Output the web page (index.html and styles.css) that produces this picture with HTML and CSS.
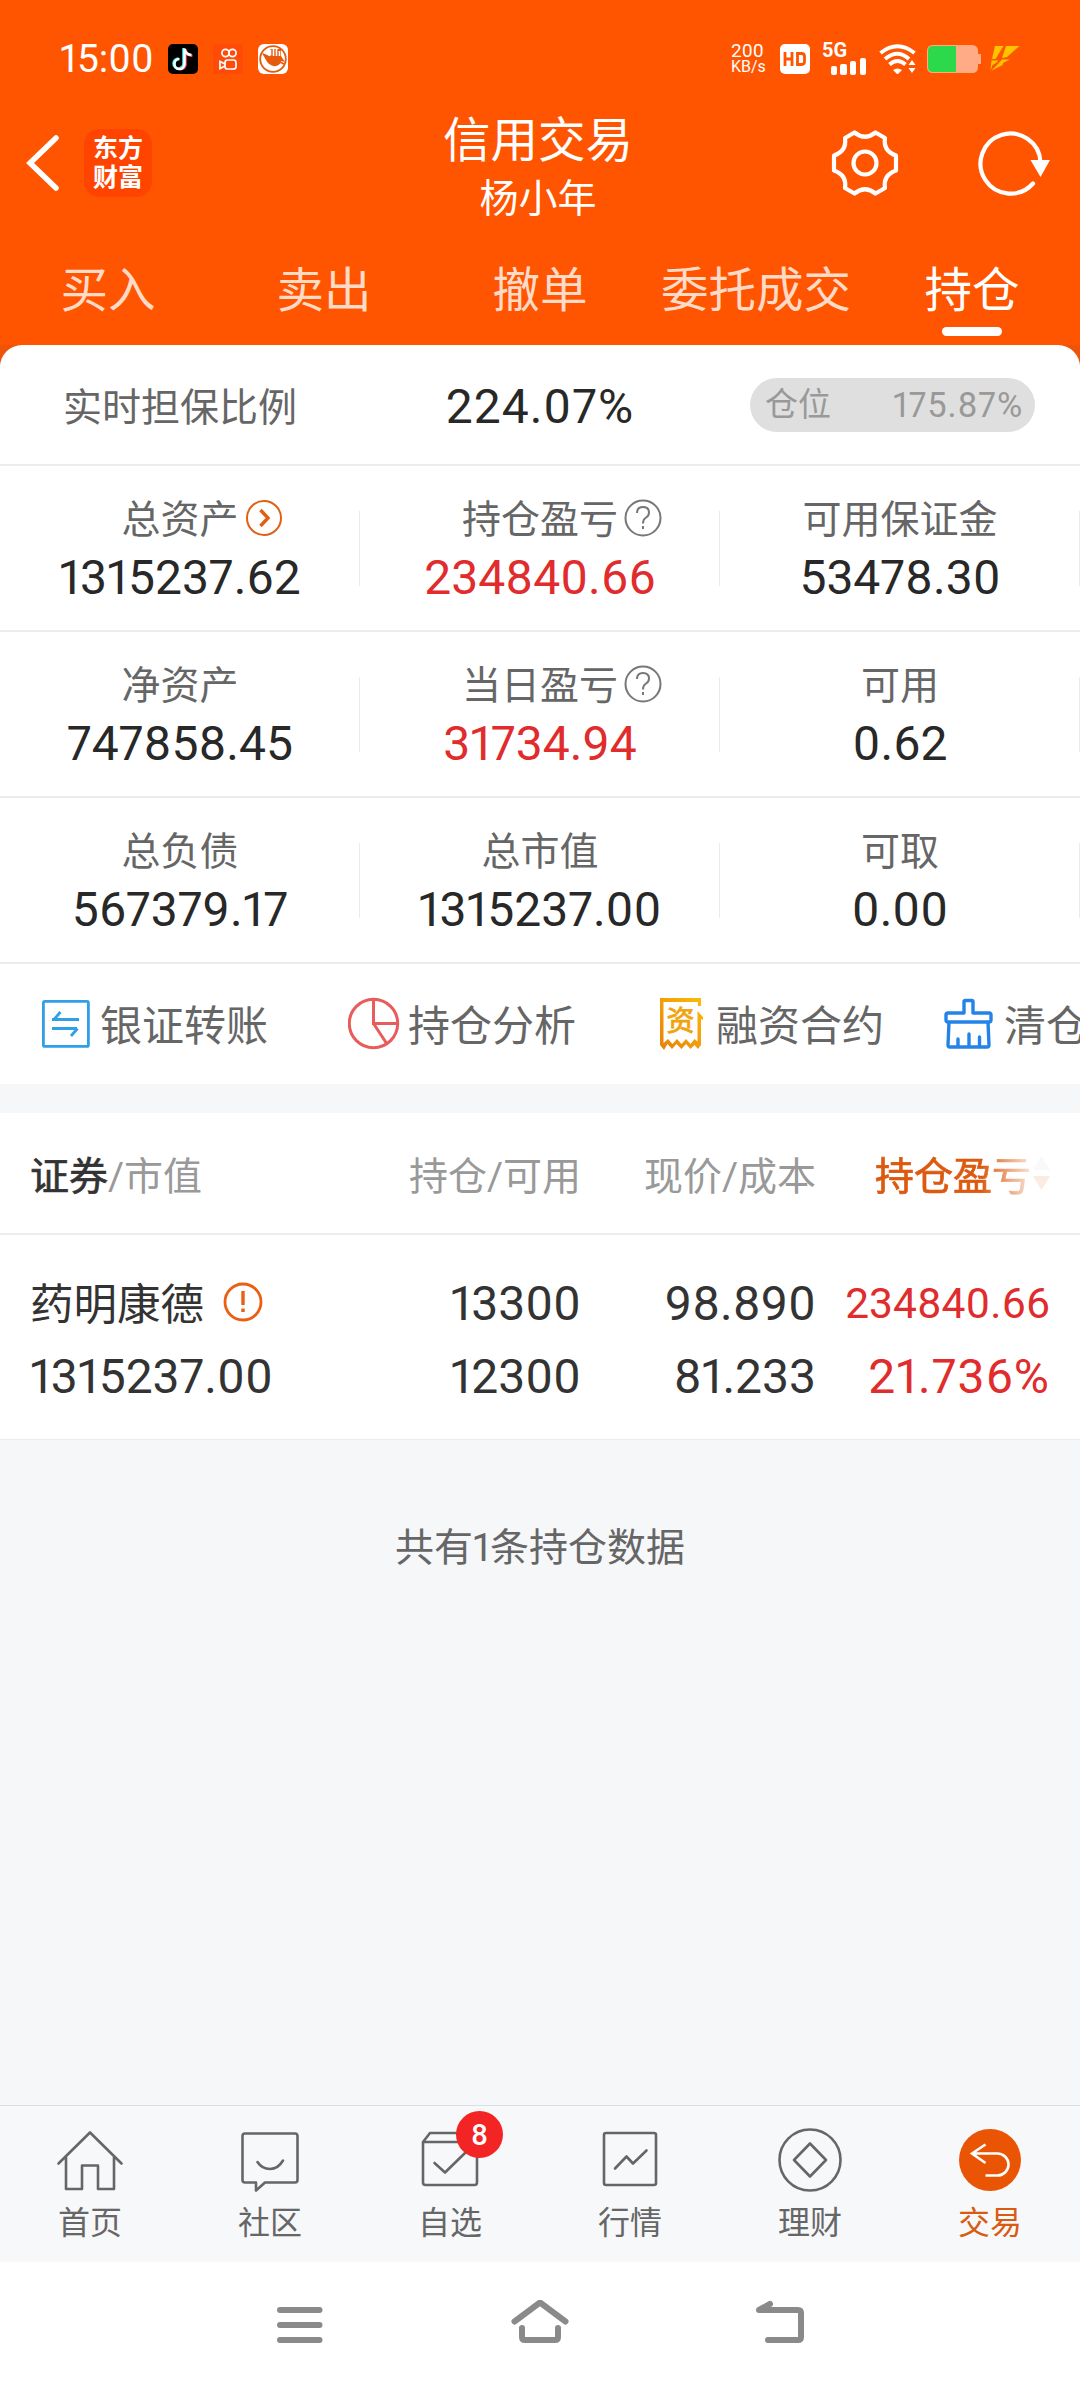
FILE: index.html
```html
<!DOCTYPE html>
<html lang="zh-CN">
<head>
    <meta charset="UTF-8">
    <meta name="viewport" content="width=device-width, initial-scale=1.0">
    <title>信用交易</title>
    <link rel="stylesheet" href="styles.css">
</head>
<body>

<header class="header">
    <!-- Status bar -->
    <div class="status-bar">
        <div class="status-left">
            <span class="time">15:00</span>
            <svg width="30" height="30" viewBox="0 0 30 30">
                <rect width="30" height="30" rx="5" fill="#000"/>
                <g fill="none" stroke-width="2.600">
                    <path d="M15.500 4v15.500a5 5 0 1 1-5-5M15.500 5q1 5 6.500 6" stroke="#25f4ee"/>
                    <path d="M17.500 5v16a5 5 0 0 1-8 3M17.500 6q1 5 7 6" stroke="#fe2c55"/>
                    <path d="M16.500 4.500V20a5 5 0 1 1-5-5M16.500 5q1 5.500 7 6" stroke="#fff"/>
                </g>
            </svg>
            <svg width="30" height="30" viewBox="0 0 30 30">
                <rect width="30" height="30" rx="2" fill="#ff4a08"/>
                <g fill="none" stroke="#fff" stroke-width="1.700">
                    <circle cx="12.500" cy="9" r="3.600"/>
                    <circle cx="19.500" cy="9" r="3.600"/>
                    <rect x="12" y="16" width="11" height="9" rx="2.500"/>
                    <path d="M12 20l-5-2.500v7l5-2.500"/>
                </g>
            </svg>
            <svg width="30" height="30" viewBox="0 0 30 30">
                <rect width="30" height="30" rx="6" fill="#fff"/>
                <circle cx="15" cy="15" r="12.800" fill="none" stroke="#e8590c" stroke-width="1.800"/>
                <path d="M4 9l8 4V5h11v7l4 6-4-1c-1 7-11 7-15-1z" fill="#e8590c"/>
                <path d="M12.500 5.500v6M15.500 5v7M18.500 5v7M21.500 7v5" stroke="#fff" stroke-width="1.600"/>
                <path d="M5 10l21 10" stroke="#e8590c" stroke-width="1.800"/>
            </svg>
        </div>
        <div class="status-right">
            <div class="net-speed"><span>200</span><span class="unit">KB/s</span></div>
            <svg class="hd" width="30" height="30" viewBox="0 0 30 30">
                <rect width="30" height="30" rx="5" fill="#fff"/>
                <path d="M5 8v14M12 8v14M5 15h7M17.500 9.500h4q3 0 3 3v5q0 3-3 3h-4z" fill="none" stroke="#ff5500" stroke-width="2.800"/>
            </svg>
            <div class="signal">
                <span>5G</span>
                <svg width="36" height="18" viewBox="0 0 36 18" fill="#fff">
                    <rect y="9" width="6" height="9" rx="2"/>
                    <rect x="9" y="7" width="7" height="11" rx="2"/>
                    <rect x="19" y="4" width="6" height="14" rx="2"/>
                    <rect x="29" y="1" width="6" height="17" rx="2"/>
                </svg>
            </div>
            <svg class="wifi" width="38" height="30" viewBox="0 0 38 30">
                <g fill="none" stroke="#fff" stroke-width="3.800">
                    <path d="M1.500 9q17-13.500 34 0"/>
                    <path d="M6 15q12.500-10.500 24 0"/>
                    <path d="M10.500 20.500q8-7 16 0"/>
                </g>
                <path d="M14 26q4.500-3 9 0l-4.500 4.500zM29.500 21l3.500-5 3.500 5zM29.500 24h7l-3.500 5z" fill="#fff"/>
            </svg>
            <svg class="battery" width="54" height="28" viewBox="0 0 54 28">
                <path d="M6 0h39q6 0 6 6v3h3v10h-3v3q0 6-6 6H6q-6 0-6-6V6q0-6 6-6z" fill="#ffab85"/>
                <path d="M6 1h23v26H6q-5 0-5-5V6q0-5 5-5z" fill="#2bd94b"/>
            </svg>
            <svg width="30" height="26" viewBox="0 0 30 26">
                <path d="M5 0h8.500L5.500 13H2zM16 0h13.500L17 11l-5 1zM1.500 14.500h7L6 17l-3.500 2-2 5.500zM12 13.500h8L13 17l-.5 2L1 25l7-7z" fill="#ffc400"/>
            </svg>
        </div>
    </div>

    <!-- Title -->
    <div class="title-bar">
        <div class="title-left">
            <svg width="34" height="58" viewBox="0 0 34 58" fill="none" stroke="#fff" stroke-width="5.500" stroke-linecap="round">
                <path d="M30 4L4 29l26 25"/>
            </svg>
            <div class="logo"><span>东方</span><span>财富</span></div>
        </div>
        <div class="title">
            <h1>信用交易</h1>
            <p>杨小年</p>
        </div>
        <div class="title-right">
            <svg width="68" height="68" viewBox="-34 -34 68 68" fill="none" stroke="#fff" stroke-width="4.200" stroke-linejoin="round">
                <circle r="11.500"/>
                <path d="M-10.500-30.500Q0-22 10.500-30.500L20-25Q18-12 31-7.500V7.500Q18 12 20 25L10.500 30.500Q0 22-10.500 30.500L-20 25Q-18 12-31 7.500V-7.500Q-18-12-20-25Z"/>
            </svg>
            <svg width="72" height="68" viewBox="-32 -34 72 68" fill="none" stroke="#fff" stroke-width="4.200" stroke-linecap="round">
                <path d="M23 20.500A30 30 0 1 1 30.500-1"/>
                <path d="M20.500-3H40L30.500 14z" fill="#fff" stroke="none"/>
            </svg>
        </div>
    </div>

    <nav class="tabs">
        <a class="tab">买入</a>
        <a class="tab">卖出</a>
        <a class="tab">撤单</a>
        <a class="tab">委托成交</a>
        <a class="tab active">持仓</a>
    </nav>
</header>

<main>
    <div class="card-wrap">
        <section class="card">
            <div class="ratio-row">
                <span class="ratio-label">实时担保比例</span>
                <span class="num">224.07%</span>
                <div class="pill"><span>仓位</span><span class="pill-num">175.87%</span></div>
            </div>

            <div class="stats">
                <div class="stat">
                    <span class="stat-label">总资产
                        <svg class="stat-icon" width="38" height="38" viewBox="0 0 38 38" fill="none" stroke="#e06012">
                            <circle cx="19" cy="19" r="17" stroke-width="2"/>
                            <path d="M15.500 11l7.500 8-7.500 8" stroke-width="3.400"/>
                        </svg>
                    </span>
                    <span class="num">1315237.62</span>
                </div>
                <div class="stat">
                    <span class="stat-label">持仓盈亏
                        <svg class="stat-icon" width="38" height="38" viewBox="0 0 38 38" fill="none" stroke="#777" stroke-width="2">
                            <circle cx="19" cy="19" r="17.500"/>
                            <path d="M13 14q0-6 6-6t6 5.500q0 3.500-3.500 5.500-2.500 1.500-2.500 5.500M19 27v3"/>
                        </svg>
                    </span>
                    <span class="num red">234840.66</span>
                </div>
                <div class="stat">
                    <span class="stat-label">可用保证金</span>
                    <span class="num">53478.30</span>
                </div>
                <div class="stat">
                    <span class="stat-label">净资产</span>
                    <span class="num">747858.45</span>
                </div>
                <div class="stat">
                    <span class="stat-label">当日盈亏
                        <svg class="stat-icon" width="38" height="38" viewBox="0 0 38 38" fill="none" stroke="#777" stroke-width="2">
                            <circle cx="19" cy="19" r="17.500"/>
                            <path d="M13 14q0-6 6-6t6 5.500q0 3.500-3.500 5.500-2.500 1.500-2.500 5.500M19 27v3"/>
                        </svg>
                    </span>
                    <span class="num red">31734.94</span>
                </div>
                <div class="stat">
                    <span class="stat-label">可用</span>
                    <span class="num">0.62</span>
                </div>
                <div class="stat">
                    <span class="stat-label">总负债</span>
                    <span class="num">567379.17</span>
                </div>
                <div class="stat">
                    <span class="stat-label">总市值</span>
                    <span class="num">1315237.00</span>
                </div>
                <div class="stat">
                    <span class="stat-label">可取</span>
                    <span class="num">0.00</span>
                </div>
            </div>

            <!-- Shortcuts, scroll off to the right -->
            <div class="shortcuts">
                <a class="shortcut">
                    <svg width="60" height="54" viewBox="0 0 60 54" fill="none" stroke="#2f9fe8" stroke-width="2.800">
                        <rect x="3.400" y="4.400" width="45" height="45" rx="1.500"/>
                        <path d="M12 22.500h27M14 22.500l6.500-7.500M12 31.500h25M37.500 31.500L31 39"/>
                    </svg>
                    <span>银证转账</span>
                </a>
                <a class="shortcut">
                    <svg width="60" height="54" viewBox="0 0 60 54" fill="none" stroke="#e85c5c" stroke-width="3">
                        <circle cx="25.500" cy="26.500" r="24.200"/>
                        <path d="M25.500 2v24.500H50M25.500 26.500L39 47"/>
                    </svg>
                    <span>持仓分析</span>
                </a>
                <a class="shortcut">
                    <svg width="60" height="54" viewBox="0 0 60 54">
                        <defs>
                            <linearGradient id="gold" x1="0" y1="1" x2="1" y2="0">
                                <stop offset="0" stop-color="#e8800c"/>
                                <stop offset="1" stop-color="#fbbc08"/>
                            </linearGradient>
                        </defs>
                        <path d="M4 1h41v8h-3V5H7.500v41l4.500-4 4.500 5L21 42l4.500 5 4.500-5 4.500 5 4-5 3 2.500V14l5.500 6v3l-2-1v26l-3 4-3.500-4-4 4-4.500-5-4.500 5-5-5-4.500 5-4.500-5L8 53l-4-5z" fill="url(#gold)"/>
                        <text x="24.500" y="33.500" class="bill-text">资</text>
                    </svg>
                    <span>融资合约</span>
                </a>
                <a class="shortcut last">
                    <svg width="60" height="54" viewBox="0 0 60 54" fill="none" stroke="#2383e8" stroke-width="3.400" stroke-linejoin="round" stroke-linecap="round">
                        <path d="M20 16V5q0-1.500 1.500-1.500h6Q29 3.500 29 5v11h16q2 0 2 2v5q0 2-2 2H4q-2 0-2-2v-5q0-2 2-2zM5 25L4 48q0 2 2 2h37q2 0 2-2l-1-23M14 49v-7M25 49V37M35.500 49v-9"/>
                    </svg>
                    <span>清仓分析</span>
                </a>
            </div>
        </section>
    </div>

    <section class="holdings">
        <div class="grid-row table-head">
            <span class="left"><b>证券</b>/市值</span>
            <span>持仓/可用</span>
            <span>现价/成本</span>
            <span class="sorted">持仓盈亏
                <svg width="17" height="34" viewBox="0 0 17 34">
                    <path d="M8.500 0L17 14H0z" fill="#ccc"/>
                    <path d="M0 20h17L8.500 34z" fill="#e05a10"/>
                </svg>
            </span>
        </div>
        <div class="grid-row table-body">
            <div class="left stock">药明康德
                <svg width="40" height="40" viewBox="0 0 40 40" fill="none" stroke="#ea5f14" stroke-width="2.800">
                    <circle cx="20" cy="20" r="18"/>
                    <path d="M20 9v14" stroke-width="3.400"/>
                    <path d="M20 26.500v3.500" stroke-width="3.400"/>
                </svg>
            </div>
            <span>13300</span>
            <span>98.890</span>
            <span class="red small">234840.66</span>
            <span class="left">1315237.00</span>
            <span>12300</span>
            <span>81.233</span>
            <span class="red percent">21.736%</span>
        </div>
    </section>

    <p class="total">共有1条持仓数据</p>
</main>

<nav class="bottom-bar">
    <a>
        <svg width="70" height="70" viewBox="-35 -35 70 70">
            <path d="M-31.500 3.500L0-27.500 31.500 3.500M-24-3v32h16V5.500H8V29h16V-3"/>
        </svg>
        <span>首页</span>
    </a>
    <a>
        <svg width="70" height="70" viewBox="-35 -35 70 70">
            <path d="M-25-26.500h50q2.500 0 2.500 2.500v44q0 2.500-2.500 2.500H-5l-9 8v-8h-11q-2.500 0-2.500-2.500v-44q0-2.500 2.500-2.500zM-12.500 2Q-8 9 0 9t13-8.500"/>
        </svg>
        <span>社区</span>
    </a>
    <a>
        <svg width="70" height="70" viewBox="-35 -35 70 70">
            <path d="M-27-18l7-9h40l7 9V22.500q0 2.500-2.500 2.500h-49q-2.500 0-2.500-2.500zH27M-15.500 3L-5 12.500 15-7"/>
        </svg>
        <i class="badge">8</i>
        <span>自选</span>
    </a>
    <a>
        <svg width="70" height="70" viewBox="-35 -35 70 70">
            <rect x="-26" y="-27" width="52" height="52" rx="2"/>
            <path d="M-15 8.500L-3.500-3.500 3 3.500 16.500-9.500"/>
        </svg>
        <span>行情</span>
    </a>
    <a>
        <svg width="70" height="70" viewBox="-35 -35 70 70">
            <circle r="30.500"/>
            <path d="M0-16.500L16 0 0 16.500-16 0z"/>
        </svg>
        <span>理财</span>
    </a>
    <a class="current">
        <svg width="70" height="70" viewBox="-35 -35 70 70">
            <circle r="31" class="disc"/>
            <path d="M-4.500-15.500L-18-6.500-4.500 3M-17-6.500H7.500a11 11 0 0 1 0 22H-4.500" class="arrow"/>
        </svg>
        <span>交易</span>
    </a>
</nav>

<!-- System navigation keys -->
<div class="system-nav">
    <svg width="60" height="50" viewBox="-30 -25 60 50"><path d="M-20-15h39.500M-20 0h39.500M-20 15h39.500"/></svg>
    <svg width="60" height="50" viewBox="-30 -25 60 50"><path d="M-25.500-3.500L0-22.500 25.500-3.500M-18 3v9q0 3 3 3h30q3 0 3-3V3"/></svg>
    <svg width="60" height="50" viewBox="-30 -25 60 50"><path d="M-12 15h30q3 0 3-3v-24q0-3-3-3h-39l11-6"/></svg>
</div>

</body>
</html>
```

FILE: styles.css
```css
* {
    box-sizing: border-box;
}

body {
    margin: 0;
    width: 1080px;
    height: 2388px;
    display: flex;
    flex-direction: column;
    overflow: hidden;
    background-color: #f6f7f9;
    color: #282828;
    font-family: Roboto, "Noto Sans CJK SC", sans-serif;
    font-variant-numeric: proportional-nums;
}

svg {
    display: block;
    flex: none;
}

h1, p {
    margin: 0;
    font-weight: normal;
}

/* Header */
.header {
    height: 345px;
    background-color: #ff5500;
    color: #fff;
}

.status-bar {
    height: 118px;
    padding: 0 60px;
    display: flex;
    justify-content: space-between;
    align-items: center;
}

.status-left {
    display: flex;
    align-items: center;
    gap: 15px;
}

.time {
    width: 93px;
    font-size: 39px;
    white-space: nowrap;
}

.status-right {
    display: flex;
    align-items: center;
}

.net-speed {
    width: 49px;
    display: flex;
    flex-direction: column;
    font-size: 19px;
    line-height: 15px;
}

.net-speed span {
    height: 16px;
}

.net-speed .unit {
    font-size: 16px;
}

.hd {
    margin-right: 12px;
}

.signal {
    width: 57px;
    height: 30px;
    display: flex;
    flex-direction: column;
    font-size: 20px;
    font-weight: bold;
    line-height: 13px;
}

.signal svg {
    margin-left: 9px;
}

.wifi {
    margin-right: 10px;
}

.battery {
    margin-right: 9px;
}

.title-bar {
    height: 117px;
    padding: 0 30px 0 26px;
    display: grid;
    grid-template-columns: 1fr 300px 1fr;
}

.title-left, .title-right {
    height: 90px;
    display: flex;
    align-items: center;
}

.title-left {
    gap: 24px;
}

.title-right {
    justify-content: flex-end;
    gap: 79px;
}

.logo {
    width: 68px;
    height: 68px;
    border-radius: 15px;
    background-color: #ff4400;
    display: flex;
    flex-direction: column;
    align-items: center;
    justify-content: center;
    font-size: 25px;
    font-weight: bold;
    line-height: 29px;
}

.title {
    display: flex;
    flex-direction: column;
    align-items: center;
}

.title h1 {
    font-size: 47.500px;
    line-height: 46px;
}

.title p {
    margin-top: 11px;
    font-size: 39px;
    line-height: 48px;
}

.tabs {
    height: 110px;
    display: grid;
    grid-template-columns: repeat(5, 216px);
}

.tab {
    padding-top: 26px;
    display: flex;
    flex-direction: column;
    align-items: center;
    font-size: 47.500px;
    line-height: 60px;
    color: #ffdac6;
}

.tab.active {
    color: #fff;
}

.tab.active::after {
    content: "";
    width: 60px;
    height: 9px;
    margin-top: 6px;
    border-radius: 5px;
    background-color: #fff;
}

/* Account summary */
.card-wrap {
    background: linear-gradient(#ee5409 20px, #fff 20px);
}

.card {
    border-radius: 22px 22px 0 0;
    background-color: #fff;
}

.ratio-row {
    height: 121px;
    padding: 0 45px 0 63px;
    display: grid;
    grid-template-columns: 357px 240px 1fr;
    align-items: center;
    border-bottom: 2px solid #ededed;
}

.ratio-label {
    padding-bottom: 2px;
    font-size: 39px;
    color: #666;
}

.num {
    font-size: 48px;
    line-height: 56px;
}

.ratio-row .num {
    padding-top: 5px;
    letter-spacing: 1px;
    text-align: center;
}

.red {
    color: #e02c2c;
}

.pill {
    width: 285px;
    height: 54px;
    padding: 0 12px 0 15px;
    justify-self: end;
    display: flex;
    justify-content: space-between;
    align-items: center;
    border-radius: 27px;
    background-color: #dfdfdf;
    color: #999;
    font-size: 33px;
    line-height: 50px;
}

.pill-num {
    font-size: 34.500px;
    letter-spacing: 0.8px;
}

.stats {
    display: grid;
    grid-template-columns: repeat(3, 360px);
    grid-auto-rows: 166px;
}

.stat {
    display: flex;
    flex-direction: column;
    align-items: center;
    padding-top: 28px;
    border-bottom: 2px solid #ededed;
    background: linear-gradient(#ebebeb, #ebebeb) right 45px / 1px 75px no-repeat;
}

.stat-label {
    position: relative;
    font-size: 39px;
    line-height: 52px;
    color: #666;
}

.stat .num {
    margin-top: 4px;
}

/* Hangs outside the label so the text stays centred */
.stat-icon {
    position: absolute;
    left: calc(100% + 6px);
    top: 5px;
}

.shortcuts {
    height: 120px;
    padding-left: 40px;
    display: flex;
    align-items: center;
    gap: 80px;
    overflow: hidden;
}

.shortcut {
    flex: none;
    display: flex;
    align-items: center;
    font-size: 42px;
    color: #666;
}

.shortcut span {
    padding-bottom: 3px;
}

.shortcut.last {
    margin-left: -20px;
}

.bill-text {
    font-size: 28px;
    text-anchor: middle;
    fill: #f2a20a;
    stroke: #f2a20a;
    stroke-width: 0.8px;
}

/* Holdings table */
.holdings {
    margin-top: 29px;
    background-color: #fff;
    border-bottom: 1px solid #ededed;
}

.grid-row {
    padding: 0 30px;
    display: grid;
    grid-template-columns: 300px 251px 235px 234px;
    align-items: center;
    text-align: right;
    white-space: nowrap;
}

.grid-row .left {
    text-align: left;
}

.table-head {
    height: 122px;
    border-bottom: 2px solid #ededed;
    font-size: 39px;
    color: #999;
}

.table-head b {
    font-weight: normal;
    -webkit-text-stroke: 0.7px #333;
    color: #333;
}

.sorted {
    display: flex;
    align-items: center;
    justify-content: flex-end;
    gap: 2px;
    -webkit-text-stroke: 0.7px #dc5a10;
    color: #dc5a10;
    mask-image: linear-gradient(to right, #000 165px, rgba(0, 0, 0, 0.5) 195px, rgba(0, 0, 0, 0.12) 218px);
}

.table-body {
    height: 204px;
    padding-top: 32px;
    grid-template-rows: 73px 73px;
    align-content: start;
    font-size: 48px;
    color: #333;
}

.table-body .stock {
    padding-bottom: 4px;
    display: flex;
    align-items: center;
    gap: 19px;
    font-size: 43.500px;
}

.table-body .red {
    color: #e02c2c;
}

.table-body .small {
    font-size: 42.500px;
}

.table-body .percent {
    letter-spacing: 1px;
}

.total {
    margin-top: 80px;
    text-align: center;
    font-size: 39px;
    line-height: 56px;
    color: #666;
}

/* Bottom bar */
.bottom-bar {
    height: 157px;
    margin-top: auto;
    padding-top: 19px;
    display: grid;
    grid-template-columns: repeat(6, 180px);
    border-top: 1px solid #dcdfe2;
    background-color: #f7f8fa;
}

.bottom-bar a {
    position: relative;
    display: flex;
    flex-direction: column;
    align-items: center;
    font-size: 32px;
    line-height: 48px;
    color: #666;
}

.bottom-bar svg {
    margin-bottom: 4px;
    fill: none;
    stroke: #666;
    stroke-width: 2.600;
    stroke-linejoin: round;
    stroke-linecap: round;
}

.bottom-bar .current {
    color: #d95b12;
}

.bottom-bar .disc {
    fill: #e95504;
    stroke: none;
}

.bottom-bar .arrow {
    stroke: #fff;
    stroke-linecap: butt;
    stroke-linejoin: miter;
}

.badge {
    position: absolute;
    left: 96px;
    top: -14px;
    width: 47px;
    height: 47px;
    border-radius: 50%;
    background-color: #f22424;
    color: #fff;
    font-size: 29px;
    font-style: normal;
    font-weight: 500;
    line-height: 48px;
    text-align: center;
}

.system-nav {
    height: 126px;
    display: flex;
    justify-content: center;
    align-items: center;
    gap: 180px;
    background-color: #fff;
}

.system-nav svg {
    fill: none;
    stroke: #8a8a8a;
    stroke-width: 6;
    stroke-linecap: round;
    stroke-linejoin: round;
}
```
